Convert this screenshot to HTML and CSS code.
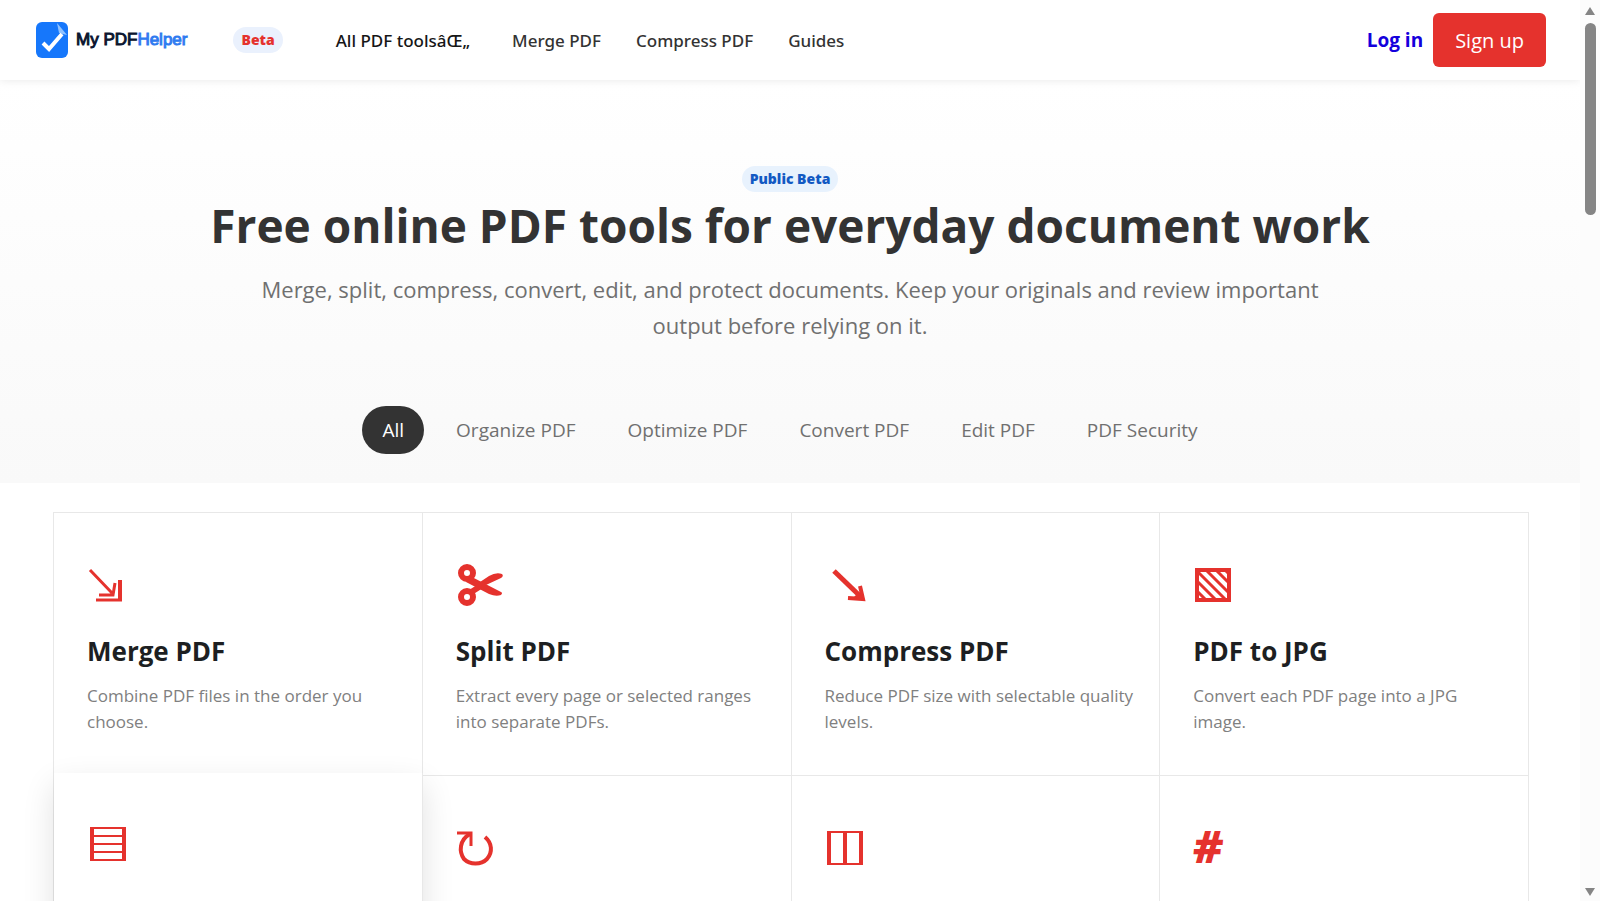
FILE: index.html
```html
<!DOCTYPE html>
<html lang="en">
<head>
<meta charset="UTF-8">
<meta name="viewport" content="width=device-width, initial-scale=1.0">
<title>My PDFHelper</title>
<link rel="stylesheet" href="styles.css">
</head>
<body>

<div class="page">
    <header class="header">
        <a class="logo" href="#">
            <svg width="32" height="36" viewBox="0 0 32 36">
                <rect width="32" height="36" rx="6" fill="#1677fb"/>
                <path d="M21 1 L31 13 L23 11 Z" fill="#8fc2ff"/>
                <path d="M7 21 L13 27 L26 12" fill="none" stroke="#fff" stroke-width="4"/>
            </svg>
            <span class="logo-txt">My PDF<span class="logo-blue">Helper</span></span>
        </a>
        <span class="beta">Beta</span>
        <nav class="nav">
            <a class="nav-all" href="#">All PDF toolsâŒ„</a>
            <a href="#">Merge PDF</a>
            <a href="#">Compress PDF</a>
            <a href="#">Guides</a>
        </nav>
        <div class="account">
            <a class="login" href="#">Log in</a>
            <button class="signup" type="button">Sign up</button>
        </div>
    </header>

    <main>
        <section class="hero">
            <span class="public-beta">Public Beta</span>
            <h1>Free online PDF tools for everyday document work</h1>
            <p>Merge, split, compress, convert, edit, and protect documents. Keep your originals and review important output before relying on it.</p>
            <div class="tabs">
                <button class="tab active" type="button">All</button>
                <button class="tab" type="button">Organize PDF</button>
                <button class="tab" type="button">Optimize PDF</button>
                <button class="tab" type="button">Convert PDF</button>
                <button class="tab" type="button">Edit PDF</button>
                <button class="tab" type="button">PDF Security</button>
            </div>
        </section>

        <section class="tools">
            <a class="card" href="#">
                <svg class="icon" viewBox="0 0 48 48">
                    <path d="M3 9 L25 32 M12 34 H26 L28 22" stroke-width="3"/>
                    <path d="M9 39 H35" stroke-width="3"/>
                    <path d="M33 40 V19" stroke-width="4"/>
                </svg>
                <h2>Merge PDF</h2>
                <p>Combine PDF files in the order you choose.</p>
            </a>
            <a class="card" href="#">
                <svg class="icon" viewBox="0 0 48 48">
                    <circle cx="11" cy="12" r="6" stroke-width="6"/>
                    <circle cx="11" cy="36" r="6" stroke-width="6"/>
                    <path class="fill" d="M14 15 L45 31 Q47 32 45 34 Q40 36 33 33 L10 21 Z"/>
                    <path class="fill" d="M13 29 L21 24 L27 27 L16 34 Z M24 21 L33 15 Q40 11 46 13 Q48 15 45 17 L30 24 Z"/>
                </svg>
                <h2>Split PDF</h2>
                <p>Extract every page or selected ranges into separate PDFs.</p>
            </a>
            <a class="card" href="#">
                <svg class="icon" viewBox="0 0 48 48">
                    <path d="M9 10 L36 36" stroke-width="5"/>
                    <path d="M23 37 L38 38 L35 25" stroke-width="4"/>
                    <path class="fill" d="M29 36 L34 31 L39 40 Z"/>
                </svg>
                <h2>Compress PDF</h2>
                <p>Reduce PDF size with selectable quality levels.</p>
            </a>
            <a class="card" href="#">
                <svg class="icon" viewBox="0 0 48 48">
                    <path d="M4 9 H36 V39 H4 Z" stroke-width="4"/>
                    <path d="M4 30 L13 39 M4 20 L23 39 M4 10 L33 39 M13 9 L36 32 M23 9 L36 22 M32 9 L36 13" stroke-width="3"/>
                </svg>
                <h2>PDF to JPG</h2>
                <p>Convert each PDF page into a JPG image.</p>
            </a>
            <a class="card lifted" href="#">
                <svg class="icon" viewBox="0 0 48 48">
                    <path d="M5 6 V40 M37 6 V40" stroke-width="4"/>
                    <path d="M3 7 H39 M3 15 H39 M3 23 H39 M3 31 H39 M3 39 H39" stroke-width="2"/>
                </svg>
            </a>
            <a class="card" href="#">
                <svg class="icon" viewBox="0 0 48 48">
                    <path d="M1 9 H15 V22" stroke-width="3"/>
                    <path d="M14 10 C3 16 3 28 8 35 C14 41 25 41 31 35 C37 28 36 19 29 13" stroke-width="4"/>
                </svg>
            </a>
            <a class="card" href="#">
                <svg class="icon" viewBox="0 0 48 48">
                    <path d="M4 7 V41 M20 7 V41 M36 7 V41" stroke-width="4"/>
                    <path d="M2 8 H38 M2 40 H38" stroke-width="2"/>
                </svg>
            </a>
            <a class="card" href="#">
                <span class="icon hash">#</span>
            </a>
        </section>
    </main>
</div>

<div class="scrollbar">
    <svg width="12" height="10" viewBox="0 0 12 10"><path d="M6 1 L11 9 H1 Z"/></svg>
    <div class="thumb"></div>
    <svg width="12" height="10" viewBox="0 0 12 10"><path d="M6 9 L11 1 H1 Z"/></svg>
</div>

</body>
</html>
```

FILE: styles.css
```css
* {
    box-sizing: border-box;
}
body {
    margin: 0;
    height: 100vh;
    display: flex;
    overflow: hidden;
    font-family: "Open Sans", "Noto Sans", sans-serif;
    color: #333;
    background: #fff;
}
a {
    text-decoration: none;
}
button {
    border: none;
    font-family: inherit;
    cursor: pointer;
}
.page {
    flex: 1;
    min-width: 0;
    overflow: hidden;
}

/* header */
.header {
    display: flex;
    align-items: center;
    height: 80px;
    padding: 0 34px 0 36px;
    background: #fff;
    position: relative;
    z-index: 2;
    box-shadow: 0 1px 8px rgba(0, 0, 0, 0.08);
}
.logo {
    display: flex;
    align-items: center;
    gap: 8px;
}
.logo-txt {
    font-family: "Liberation Sans", Arial, sans-serif;
    font-size: 17px;
    color: #0b1530;
    -webkit-text-stroke: 1px;
}
.logo-blue {
    color: #2f7bf0;
}
.beta {
    margin-left: 46px;
    padding: 0 8px;
    border-radius: 13px;
    background: #eaf1fd;
    color: #e5322d;
    font-size: 14px;
    font-weight: 800;
    line-height: 26px;
}
.nav {
    display: flex;
    gap: 35px;
    margin-left: 53px;
    font-family: "Noto Sans", "Open Sans", sans-serif;
    font-size: 17px;
    font-weight: 500;
}
.nav a {
    color: #333;
}
.nav .nav-all {
    margin-right: 7px;
    color: #161616;
}
.account {
    display: flex;
    align-items: center;
    gap: 10px;
    margin-left: auto;
}
.login {
    color: #1400dc;
    font-size: 19px;
    font-weight: 700;
}
.signup {
    height: 54px;
    padding: 0 22px;
    border-radius: 6px;
    background: #e5322d;
    color: #fff;
    font-size: 20px;
}

/* hero */
.hero {
    display: flex;
    flex-direction: column;
    align-items: center;
    padding: 86px 40px 29px;
    background: linear-gradient(#fff, #f9f9f9);
    text-align: center;
}
.public-beta {
    padding: 0 8px;
    border-radius: 13px;
    background: #e8f2fd;
    color: #1259c3;
    font-size: 14px;
    font-weight: 800;
    line-height: 26px;
}
h1 {
    margin: 0;
    font-size: 46px;
    font-weight: 700;
    line-height: 66px;
}
.hero p {
    max-width: 1100px;
    margin: 13px 0 63px;
    color: #707070;
    font-size: 22px;
    line-height: 36px;
}
.tabs {
    display: flex;
    gap: 12px;
}
.tab {
    height: 48px;
    padding: 0 20px;
    border-radius: 24px;
    background: transparent;
    color: #707070;
    font-size: 19px;
}
.tab.active {
    background: #333;
    color: #fff;
}

/* tools grid */
.tools {
    display: grid;
    grid-template-columns: repeat(4, 1fr);
    margin: 29px 51px 0 53px;
    border-top: 1px solid #e8e8e8;
    border-left: 1px solid #e8e8e8;
}
.card {
    min-height: 263px;
    padding: 48px 24px 36px 33px;
    border-right: 1px solid #e8e8e8;
    border-bottom: 1px solid #e8e8e8;
    background: #fff;
}
.card.lifted {
    position: relative;
    z-index: 1;
    transform: translateY(-3px);
    box-shadow: 0 12px 30px rgba(0, 0, 0, 0.12);
}
.icon {
    display: block;
    width: 48px;
    height: 48px;
    fill: none;
    stroke: #e5322d;
}
.icon .fill {
    fill: #e5322d;
    stroke: none;
}
.hash {
    color: #e5322d;
    font-size: 45px;
    font-style: italic;
    font-weight: 800;
    line-height: 44px;
}
.card h2 {
    margin: 24px 0 14px;
    color: #1d1f22;
    font-size: 26px;
    font-weight: 700;
    line-height: 36px;
}
.card p {
    margin: 0;
    color: #808080;
    font-size: 17px;
    line-height: 26px;
}

/* scroll bar */
.scrollbar {
    display: flex;
    flex-direction: column;
    align-items: center;
    width: 20px;
    padding: 6px 0 4px;
    background: #fcfcfc;
    fill: #858585;
}
.thumb {
    width: 11px;
    height: 192px;
    margin: 7px 0 auto;
    border-radius: 6px;
    background: #858585;
}
```
